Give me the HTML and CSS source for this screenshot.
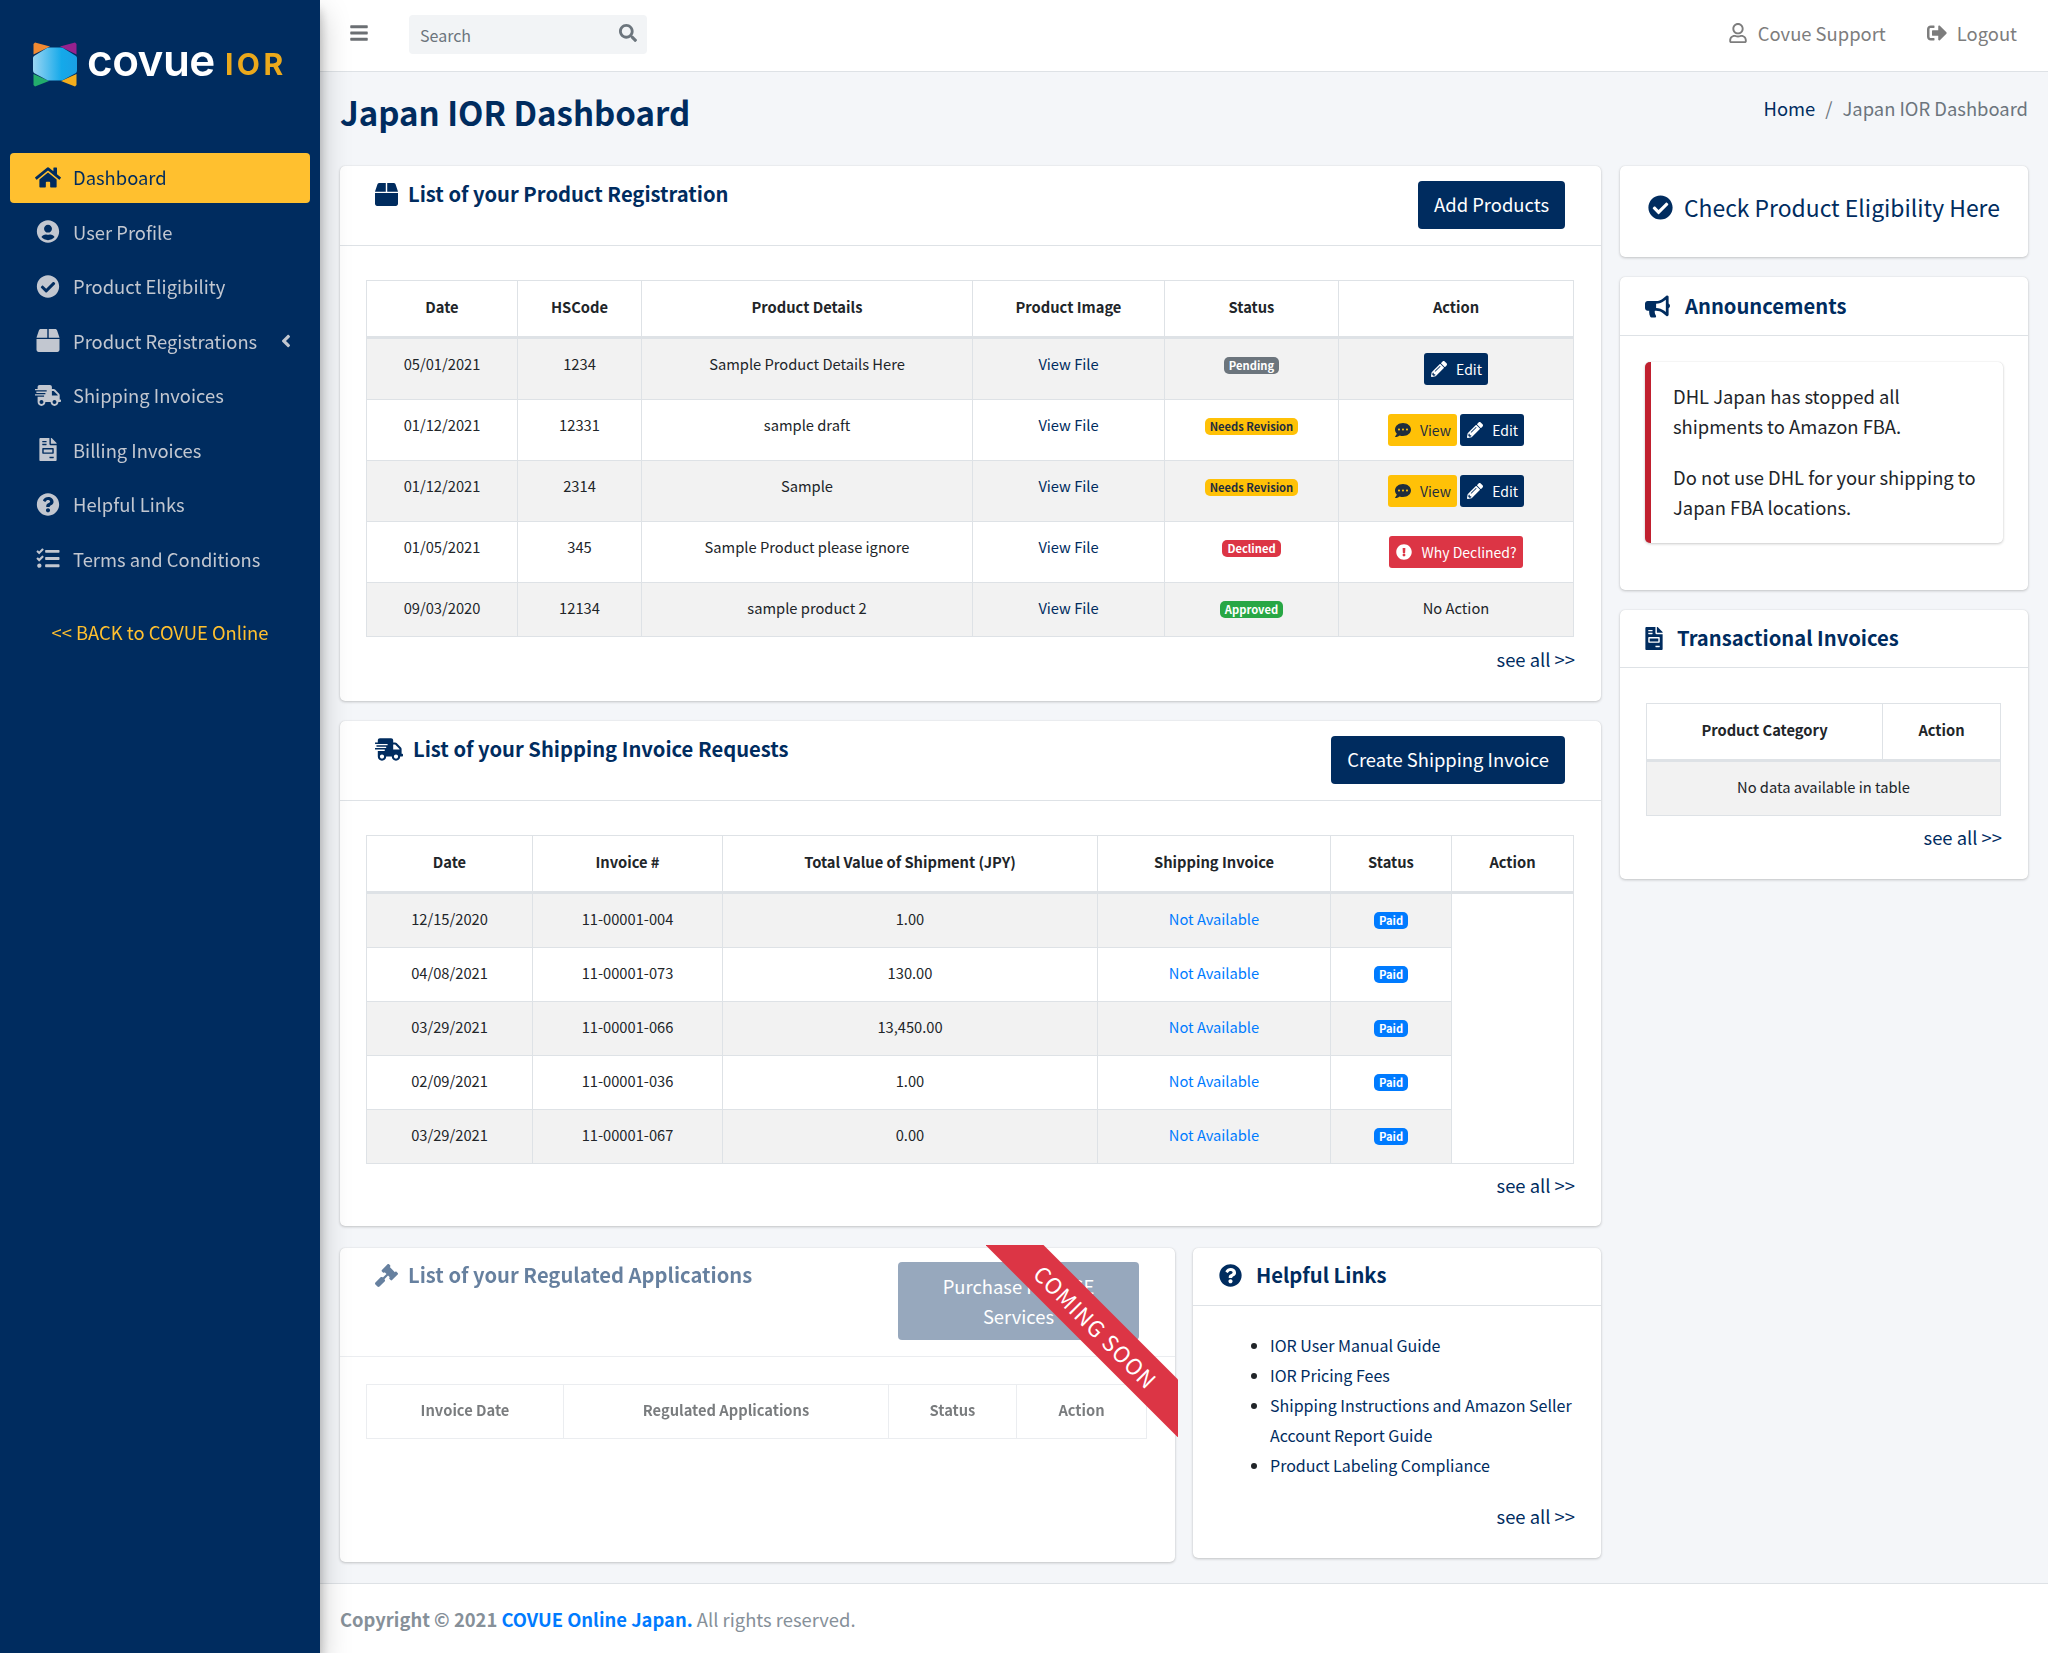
FILE: index.html
```html
<!DOCTYPE html>
<html lang="en">
<head>
    <meta charset="UTF-8">
    <meta name="viewport" content="width=device-width, initial-scale=1.0">
    <title>Japan IOR Dashboard</title>
    <link rel="stylesheet" href="styles.css">
</head>
<body>
    <!-- icon sprite -->
    <svg class="sprite" xmlns="http://www.w3.org/2000/svg">
        <symbol id="i-home" viewBox="0 0 576 512"><path d="M280.37 148.26L96 300.11V464a16 16 0 0 0 16 16l112.06-.29a16 16 0 0 0 15.92-16V368a16 16 0 0 1 16-16h64a16 16 0 0 1 16 16v95.64a16 16 0 0 0 16 16.05L464 480a16 16 0 0 0 16-16V300L295.67 148.26a12.19 12.19 0 0 0-15.3 0zM571.6 251.47L488 182.56V44.05a12 12 0 0 0-12-12h-56a12 12 0 0 0-12 12v72.61L318.47 43a48 48 0 0 0-61 0L4.34 251.47a12 12 0 0 0-1.6 16.9l25.5 31A12 12 0 0 0 45.15 301l235.22-193.74a12.19 12.19 0 0 1 15.3 0L530.9 301a12 12 0 0 0 16.9-1.6l25.5-31a12 12 0 0 0-1.7-16.93z"/></symbol>
        <symbol id="i-user-circle" viewBox="0 0 496 512"><path d="M248 8C111 8 0 119 0 256s111 248 248 248 248-111 248-248S385 8 248 8zm0 96c48.6 0 88 39.4 88 88s-39.4 88-88 88-88-39.4-88-88 39.4-88 88-88zm0 344c-58.7 0-111.3-26.6-146.5-68.2 18.8-35.4 55.6-59.8 98.5-59.8 2.4 0 4.8.4 7.1 1.1 13 4.2 26.6 6.9 40.9 6.9 14.3 0 28-2.7 40.9-6.9 2.3-.7 4.7-1.1 7.1-1.1 42.9 0 79.7 24.4 98.5 59.8C359.3 421.4 306.7 448 248 448z"/></symbol>
        <symbol id="i-check" viewBox="0 0 512 512"><path d="M504 256c0 136.967-111.033 248-248 248S8 392.967 8 256 119.033 8 256 8s248 111.033 248 248zM227.314 387.314l184-184c6.248-6.248 6.248-16.379 0-22.627l-22.627-22.627c-6.248-6.249-16.379-6.249-22.628 0L216 308.118l-70.059-70.059c-6.248-6.248-16.379-6.248-22.628 0l-22.627 22.627c-6.248 6.248-6.248 16.379 0 22.627l104 104c6.249 6.249 16.379 6.249 22.628.001z"/></symbol>
        <symbol id="i-box" viewBox="0 0 512 512"><path d="M509.5 184.6L458.9 32.8C452.4 13.2 434.1 0 413.4 0H272v192h238.7c-.4-2.5-.4-5-1.2-7.4zM240 0H98.6c-20.7 0-39 13.2-45.5 32.8L2.5 184.6c-.8 2.4-.8 4.9-1.2 7.4H240V0zM0 224v240c0 26.5 21.5 48 48 48h416c26.5 0 48-21.5 48-48V224H0z"/></symbol>
        <symbol id="i-truck" viewBox="0 0 640 512"><path d="M624 352h-16V243.9c0-12.7-5.1-24.9-14.1-33.9L494 110.1c-9-9-21.2-14.1-33.9-14.1H416V48c0-26.5-21.5-48-48-48H112C85.5 0 64 21.5 64 48v48H8c-4.4 0-8 3.6-8 8v16c0 4.4 3.6 8 8 8h272c4.4 0 8 3.6 8 8v16c0 4.4-3.6 8-8 8H40c-4.4 0-8 3.6-8 8v16c0 4.4 3.6 8 8 8h208c4.4 0 8 3.6 8 8v16c0 4.4-3.6 8-8 8H8c-4.4 0-8 3.6-8 8v16c0 4.4 3.6 8 8 8h208c4.4 0 8 3.6 8 8v16c0 4.4-3.6 8-8 8H64v128c0 53 43 96 96 96s96-43 96-96h128c0 53 43 96 96 96s96-43 96-96h48c8.8 0 16-7.2 16-16v-32c0-8.8-7.2-16-16-16zM160 464c-26.5 0-48-21.5-48-48s21.5-48 48-48 48 21.5 48 48-21.5 48-48 48zm320 0c-26.5 0-48-21.5-48-48s21.5-48 48-48 48 21.5 48 48-21.5 48-48 48zm80-208H416V144h44.1l99.9 99.9V256z"/></symbol>
        <symbol id="i-invoice" viewBox="0 0 384 512"><path d="M288 256H96v64h192v-64zm89-151L279.1 7c-4.5-4.5-10.6-7-17-7H256v128h128v-6.1c0-6.3-2.5-12.4-7-16.9zm-153 31V0H24C10.7 0 0 10.7 0 24v464c0 13.3 10.7 24 24 24h336c13.3 0 24-10.7 24-24V160H248c-13.2 0-24-10.8-24-24zM64 72c0-4.42 3.58-8 8-8h80c4.42 0 8 3.58 8 8v16c0 4.42-3.58 8-8 8H72c-4.42 0-8-3.58-8-8V72zm0 64c0-4.42 3.58-8 8-8h80c4.42 0 8 3.58 8 8v16c0 4.42-3.58 8-8 8H72c-4.42 0-8-3.58-8-8v-16zm256 304c0 4.42-3.58 8-8 8h-80c-4.42 0-8-3.58-8-8v-16c0-4.42 3.58-8 8-8h80c4.42 0 8 3.58 8 8v16zm0-200v96c0 8.84-7.16 16-16 16H80c-8.84 0-16-7.16-16-16v-96c0-8.84 7.16-16 16-16h224c8.84 0 16 7.16 16 16z"/></symbol>
        <symbol id="i-question" viewBox="0 0 512 512"><path d="M504 256c0 136.997-111.043 248-248 248S8 392.997 8 256C8 119.083 119.043 8 256 8s248 111.083 248 248zM262.655 90c-54.497 0-89.255 22.957-116.549 63.758-3.536 5.286-2.353 12.415 2.715 16.258l34.699 26.31c5.205 3.947 12.621 3.008 16.665-2.122 17.864-22.658 30.113-35.797 57.303-35.797 20.429 0 45.698 13.148 45.698 32.958 0 14.976-12.363 22.667-32.534 33.976C247.128 238.528 216 254.941 216 296v4c0 6.627 5.373 12 12 12h56c6.627 0 12-5.373 12-12v-1.333c0-28.462 83.186-29.647 83.186-106.667 0-58.002-60.165-102-116.531-102zM256 338c-25.365 0-46 20.635-46 46 0 25.364 20.635 46 46 46s46-20.636 46-46c0-25.365-20.635-46-46-46z"/></symbol>
        <symbol id="i-tasks" viewBox="0 0 512 512"><path d="M139.61 35.5a12 12 0 0 0-17 0L58.93 98.81l-22.7-22.12a12 12 0 0 0-17 0L3.53 92.41a12 12 0 0 0 0 17l47.59 47.4a12.78 12.78 0 0 0 17.61 0l15.59-15.62L156.52 69a12.09 12.09 0 0 0 .09-17zm0 159.19a12 12 0 0 0-17 0l-63.68 63.72-22.7-22.1a12 12 0 0 0-17 0L3.53 252a12 12 0 0 0 0 17L51 316.5a12.77 12.77 0 0 0 17.6 0l15.7-15.69 72.2-72.22a12 12 0 0 0 .09-16.9zM64 368c-26.49 0-48.59 21.5-48.59 48S37.53 464 64 464a48 48 0 0 0 0-96zm432 16H208a16 16 0 0 0-16 16v32a16 16 0 0 0 16 16h288a16 16 0 0 0 16-16v-32a16 16 0 0 0-16-16zm0-320H208a16 16 0 0 0-16 16v32a16 16 0 0 0 16 16h288a16 16 0 0 0 16-16V80a16 16 0 0 0-16-16zm0 160H208a16 16 0 0 0-16 16v32a16 16 0 0 0 16 16h288a16 16 0 0 0 16-16v-32a16 16 0 0 0-16-16z"/></symbol>
        <symbol id="i-pencil" viewBox="0 0 512 512"><path d="M497.9 142.1l-46.1 46.1c-4.7 4.7-12.3 4.7-17 0l-111-111c-4.7-4.7-4.7-12.3 0-17l46.1-46.1c18.7-18.7 49.1-18.7 67.9 0l60.1 60.1c18.8 18.7 18.8 49.1 0 67.9zM284.2 99.8L21.6 362.4.4 483.9c-2.9 16.4 11.4 30.6 27.8 27.8l121.5-21.3 262.6-262.6c4.7-4.7 4.7-12.3 0-17l-111-111c-4.8-4.7-12.4-4.7-17.1 0zM124.1 339.9c-5.5-5.5-5.5-14.3 0-19.8l154-154c5.5-5.5 14.3-5.5 19.8 0s5.5 14.3 0 19.8l-154 154c-5.5 5.5-14.3 5.5-19.8 0zM88 424h48v36.3l-64.5 11.3-31.1-31.1L51.7 376H88v48z"/></symbol>
        <symbol id="i-comment" viewBox="0 0 512 512"><path d="M256 32C114.6 32 0 125.1 0 240c0 49.6 21.4 95 57 130.7C44.5 421.1 2.7 466 2.2 466.5c-2.2 2.3-2.8 5.7-1.5 8.7S4.8 480 8 480c66.3 0 116-31.8 140.6-51.4 32.7 12.3 69 19.4 107.4 19.4 141.4 0 256-93.1 256-208S397.4 32 256 32zM128 272c-17.7 0-32-14.3-32-32s14.3-32 32-32 32 14.3 32 32-14.3 32-32 32zm128 0c-17.7 0-32-14.3-32-32s14.3-32 32-32 32 14.3 32 32-14.3 32-32 32zm128 0c-17.7 0-32-14.3-32-32s14.3-32 32-32 32 14.3 32 32-14.3 32-32 32z"/></symbol>
        <symbol id="i-exclaim" viewBox="0 0 512 512"><path d="M504 256c0 136.997-111.043 248-248 248S8 392.997 8 256C8 119.083 119.043 8 256 8s248 111.083 248 248zm-248 50c-25.405 0-46 20.595-46 46s20.595 46 46 46 46-20.595 46-46-20.595-46-46-46zm-43.673-165.346l7.418 136c.347 6.364 5.609 11.346 11.982 11.346h48.546c6.373 0 11.635-4.982 11.982-11.346l7.418-136c.375-6.874-5.098-12.654-11.982-12.654h-63.383c-6.884 0-12.356 5.78-11.981 12.654z"/></symbol>
        <symbol id="i-bullhorn" viewBox="0 0 576 512"><path d="M576 240c0-23.63-12.95-44.04-32-55.12V32.01C544 23.26 537.02 0 512 0c-7.12 0-14.19 2.38-19.98 7.02l-85.03 68.03C364.28 109.19 310.66 128 256 128H64c-35.35 0-64 28.65-64 64v96c0 35.35 28.65 64 64 64h33.7c-1.39 10.48-2.18 21.14-2.18 32 0 39.77 9.26 77.35 25.56 110.94 5.19 10.69 16.52 17.06 28.4 17.06h74.28c26.05 0 41.69-29.84 25.9-50.56-16.4-21.52-26.15-48.36-26.15-77.44 0-11.11 1.62-21.79 4.41-32H256c54.66 0 108.28 18.81 150.98 52.95l85.03 68.03a32.023 32.023 0 0 0 19.98 7.02c24.92 0 32-22.78 32-32V295.13C563.05 284.04 576 263.63 576 240zm-96 141.42l-33.05-26.44C392.95 311.78 325.12 288 256 288v-96c69.12 0 136.95-23.78 190.95-66.98L480 98.58v282.84z"/></symbol>
        <symbol id="i-gavel" viewBox="0 0 512 512"><path d="M504.971 199.362l-22.627-22.627c-9.373-9.373-24.569-9.373-33.941 0l-5.657 5.657L329.608 69.255l5.657-5.657c9.373-9.373 9.373-24.569 0-33.941L312.638 7.029c-9.373-9.373-24.569-9.373-33.941 0L154.246 131.48c-9.373 9.373-9.373 24.569 0 33.941l22.627 22.627c9.373 9.373 24.569 9.373 33.941 0l5.657-5.657 39.598 39.598-81.04 81.04-5.657-5.657c-12.497-12.497-32.758-12.497-45.255 0L9.373 412.118c-12.497 12.497-12.497 32.758 0 45.255l45.255 45.255c12.497 12.497 32.758 12.497 45.255 0l114.745-114.745c12.497-12.497 12.497-32.758 0-45.255l-5.657-5.657 81.04-81.04 39.598 39.598-5.657 5.657c-9.373 9.373-9.373 24.569 0 33.941l22.627 22.627c9.373 9.373 24.569 9.373 33.941 0l124.451-124.451c9.372-9.372 9.372-24.568 0-33.941z"/></symbol>
        <symbol id="i-search" viewBox="0 0 512 512"><path d="M505 442.7L405.3 343c-4.5-4.5-10.6-7-17-7H372c27.6-35.3 44-79.7 44-128C416 93.1 322.9 0 208 0S0 93.1 0 208s93.1 208 208 208c48.3 0 92.7-16.4 128-44v16.3c0 6.4 2.5 12.5 7 17l99.7 99.7c9.4 9.4 24.6 9.4 33.9 0l28.3-28.3c9.4-9.4 9.4-24.6.1-34zM208 336c-70.7 0-128-57.2-128-128 0-70.7 57.2-128 128-128 70.7 0 128 57.2 128 128 0 70.7-57.2 128-128 128z"/></symbol>
        <symbol id="i-bars" viewBox="0 0 448 512"><path d="M16 132h416c8.837 0 16-7.163 16-16V76c0-8.837-7.163-16-16-16H16C7.163 60 0 67.163 0 76v40c0 8.837 7.163 16 16 16zm0 160h416c8.837 0 16-7.163 16-16v-40c0-8.837-7.163-16-16-16H16c-8.837 0-16 7.163-16 16v40c0 8.837 7.163 16 16 16zm0 160h416c8.837 0 16-7.163 16-16v-40c0-8.837-7.163-16-16-16H16c-8.837 0-16 7.163-16 16v40c0 8.837 7.163 16 16 16z"/></symbol>
        <symbol id="i-logout" viewBox="0 0 512 512"><path d="M497 273L329 441c-15 15-41 4.5-41-17v-96H152c-13.3 0-24-10.7-24-24v-96c0-13.3 10.7-24 24-24h136V88c0-21.4 25.9-32 41-17l168 168c9.3 9.4 9.3 24.6 0 34zM192 436v-40c0-6.6-5.4-12-12-12H96c-17.7 0-32-14.3-32-32V160c0-17.7 14.3-32 32-32h84c6.6 0 12-5.4 12-12V76c0-6.6-5.4-12-12-12H96c-53 0-96 43-96 96v192c0 53 43 96 96 96h84c6.6 0 12-5.4 12-12z"/></symbol>
        <symbol id="i-user" viewBox="0 0 448 512"><path d="M313.6 304c-28.7 0-42.5 16-89.6 16-47.1 0-60.8-16-89.6-16C60.2 304 0 364.2 0 438.4V464c0 26.5 21.5 48 48 48h352c26.5 0 48-21.5 48-48v-25.6c0-74.2-60.2-134.4-134.4-134.4zM400 464H48v-25.6c0-47.6 38.8-86.4 86.4-86.4 14.6 0 38.3 16 89.6 16 51.7 0 74.9-16 89.6-16 47.6 0 86.4 38.8 86.4 86.4V464zM224 288c79.5 0 144-64.5 144-144S303.5 0 224 0 80 64.5 80 144s64.5 144 144 144zm0-240c52.9 0 96 43.1 96 96s-43.1 96-96 96-96-43.1-96-96 43.1-96 96-96z"/></symbol>
        <symbol id="i-angle" viewBox="0 0 256 512"><path d="M31.7 239l136-136c9.4-9.4 24.6-9.4 33.9 0l22.6 22.6c9.4 9.4 9.4 24.6 0 33.9L127.9 256l96.4 96.4c9.4 9.4 9.4 24.6 0 33.9L201.7 409c-9.4 9.4-24.6 9.4-33.9 0l-136-136c-9.5-9.4-9.5-24.6-.1-34z"/></symbol>
    </svg>

    <div class="wrapper">
        <aside class="sidebar">
            <a class="brand" href="#">
                <svg class="brand-mark" viewBox="0 0 44 45">
                    <defs>
                        <linearGradient id="markBlue" x1="0" x2="1" y1="0" y2="0">
                            <stop offset="0" stop-color="#9ad5f2"/>
                            <stop offset="0.65" stop-color="#14a9ea"/>
                            <stop offset="1" stop-color="#1a9fe4"/>
                        </linearGradient>
                    </defs>
                    <path fill="#f08a32" d="M2 0.5 L17 4.5 L0.5 12.5 L0.5 2 Z"/>
                    <path fill="#96218e" d="M42 0.5 L27 4.5 L43.5 12.5 L43.5 2 Z"/>
                    <path fill="#23ad6c" d="M0.5 32 L16 39 L2 44.5 L0.5 43 Z"/>
                    <path fill="#f3ae1d" d="M43.5 32 L28 39 L42 44.5 L43.5 43 Z"/>
                    <path fill="url(#markBlue)" d="M1 14 L14 6 Q15 5.5 16 5.5 L28 5.5 Q29 5.5 30 6 L43 14 Q44 15 44 16 L44 28 Q44 30 43 31 L30 38 Q29 38.5 28 38.5 L16 38.5 Q15 38.5 14 38 L1 31 Q0 30 0 28 L0 16 Q0 15 1 14 Z"/>
                </svg>
                <span class="brand-name">covue</span>
                <span class="brand-tag">IOR</span>
            </a>
            <ul class="nav">
                <li class="nav-item active"><svg class="nav-icon"><use href="#i-home"/></svg>Dashboard</li>
                <li class="nav-item"><svg class="nav-icon"><use href="#i-user-circle"/></svg>User Profile</li>
                <li class="nav-item"><svg class="nav-icon"><use href="#i-check"/></svg>Product Eligibility</li>
                <li class="nav-item"><svg class="nav-icon"><use href="#i-box"/></svg>Product Registrations<svg class="nav-angle"><use href="#i-angle"/></svg></li>
                <li class="nav-item"><svg class="nav-icon"><use href="#i-truck"/></svg>Shipping Invoices</li>
                <li class="nav-item"><svg class="nav-icon"><use href="#i-invoice"/></svg>Billing Invoices</li>
                <li class="nav-item"><svg class="nav-icon"><use href="#i-question"/></svg>Helpful Links</li>
                <li class="nav-item"><svg class="nav-icon"><use href="#i-tasks"/></svg>Terms and Conditions</li>
            </ul>
            <a class="back-link" href="#">&lt;&lt; BACK to COVUE Online</a>
        </aside>

        <div class="main">
            <header class="topbar">
                <svg class="topbar-bars"><use href="#i-bars"/></svg>
                <div class="search">
                    <span>Search</span>
                    <svg class="search-icon"><use href="#i-search"/></svg>
                </div>
                <div class="topbar-right">
                    <a class="topbar-link" href="#"><svg class="topbar-icon"><use href="#i-user"/></svg>Covue Support</a>
                    <a class="topbar-link" href="#"><svg class="topbar-icon"><use href="#i-logout"/></svg>Logout</a>
                </div>
            </header>

            <div class="page-head">
                <h1>Japan IOR Dashboard</h1>
                <div class="breadcrumb"><a href="#">Home</a><span class="sep">/</span><span>Japan IOR Dashboard</span></div>
            </div>

            <div class="content">
                <div class="col-left">
                    <section class="card">
                        <div class="card-head tall">
                            <h2 class="card-title"><svg class="title-icon"><use href="#i-box"/></svg>List of your Product Registration</h2>
                            <a class="btn-primary" href="#">Add Products</a>
                        </div>
                        <div class="card-body">
                            <table class="table">
                                <colgroup>
                                    <col class="w151"><col class="w124"><col class="w331"><col class="w192"><col class="w174"><col>
                                </colgroup>
                                <thead>
                                    <tr><th>Date</th><th>HSCode</th><th>Product Details</th><th>Product Image</th><th>Status</th><th>Action</th></tr>
                                </thead>
                                <tbody>
                                    <tr>
                                        <td>05/01/2021</td><td>1234</td><td>Sample Product Details Here</td><td><a href="#">View File</a></td>
                                        <td><span class="badge grey">Pending</span></td>
                                        <td><a class="btn-sm navy" href="#"><svg class="btn-icon"><use href="#i-pencil"/></svg>Edit</a></td>
                                    </tr>
                                    <tr>
                                        <td>01/12/2021</td><td>12331</td><td>sample draft</td><td><a href="#">View File</a></td>
                                        <td><span class="badge yellow">Needs Revision</span></td>
                                        <td><a class="btn-sm amber" href="#"><svg class="btn-icon"><use href="#i-comment"/></svg>View</a> <a class="btn-sm navy" href="#"><svg class="btn-icon"><use href="#i-pencil"/></svg>Edit</a></td>
                                    </tr>
                                    <tr>
                                        <td>01/12/2021</td><td>2314</td><td>Sample</td><td><a href="#">View File</a></td>
                                        <td><span class="badge yellow">Needs Revision</span></td>
                                        <td><a class="btn-sm amber" href="#"><svg class="btn-icon"><use href="#i-comment"/></svg>View</a> <a class="btn-sm navy" href="#"><svg class="btn-icon"><use href="#i-pencil"/></svg>Edit</a></td>
                                    </tr>
                                    <tr>
                                        <td>01/05/2021</td><td>345</td><td>Sample Product please ignore</td><td><a href="#">View File</a></td>
                                        <td><span class="badge red">Declined</span></td>
                                        <td><a class="btn-sm crimson" href="#"><svg class="btn-icon"><use href="#i-exclaim"/></svg>Why Declined?</a></td>
                                    </tr>
                                    <tr>
                                        <td>09/03/2020</td><td>12134</td><td>sample product 2</td><td><a href="#">View File</a></td>
                                        <td><span class="badge green">Approved</span></td>
                                        <td>No Action</td>
                                    </tr>
                                </tbody>
                            </table>
                            <div class="see-all"><a href="#">see all &gt;&gt;</a></div>
                        </div>
                    </section>

                    <section class="card compact">
                        <div class="card-head tall">
                            <h2 class="card-title"><svg class="title-icon wide"><use href="#i-truck"/></svg>List of your Shipping Invoice Requests</h2>
                            <a class="btn-primary" href="#">Create Shipping Invoice</a>
                        </div>
                        <div class="card-body">
                            <table class="table">
                                <colgroup>
                                    <col class="w166"><col class="w190"><col class="w375"><col class="w233"><col class="w121"><col>
                                </colgroup>
                                <thead>
                                    <tr><th>Date</th><th>Invoice #</th><th>Total Value of Shipment (JPY)</th><th>Shipping Invoice</th><th>Status</th><th>Action</th></tr>
                                </thead>
                                <tbody>
                                    <tr><td>12/15/2020</td><td>11-00001-004</td><td>1.00</td><td><a class="blue" href="#">Not Available</a></td><td><span class="badge paid">Paid</span></td></tr>
                                    <tr><td>04/08/2021</td><td>11-00001-073</td><td>130.00</td><td><a class="blue" href="#">Not Available</a></td><td><span class="badge paid">Paid</span></td></tr>
                                    <tr><td>03/29/2021</td><td>11-00001-066</td><td>13,450.00</td><td><a class="blue" href="#">Not Available</a></td><td><span class="badge paid">Paid</span></td></tr>
                                    <tr><td>02/09/2021</td><td>11-00001-036</td><td>1.00</td><td><a class="blue" href="#">Not Available</a></td><td><span class="badge paid">Paid</span></td></tr>
                                    <tr><td>03/29/2021</td><td>11-00001-067</td><td>0.00</td><td><a class="blue" href="#">Not Available</a></td><td><span class="badge paid">Paid</span></td></tr>
                                </tbody>
                            </table>
                            <div class="see-all"><a href="#">see all &gt;&gt;</a></div>
                        </div>
                    </section>

                    <div class="bottom-row">
                        <section class="card regulated">
                            <div class="faded">
                                <div class="card-head regulated-head">
                                    <h2 class="card-title"><svg class="title-icon"><use href="#i-gavel"/></svg>List of your Regulated Applications</h2>
                                    <a class="btn-primary two-line" href="#">Purchase IOR PSE<br>Services</a>
                                </div>
                                <div class="card-body regulated-body">
                                    <table class="table plain">
                                        <colgroup>
                                            <col class="w197"><col class="w325"><col class="w128"><col>
                                        </colgroup>
                                        <thead>
                                            <tr><th>Invoice Date</th><th>Regulated Applications</th><th>Status</th><th>Action</th></tr>
                                        </thead>
                                    </table>
                                </div>
                            </div>
                            <div class="ribbon"><span>COMING SOON</span></div>
                        </section>

                        <section class="card links">
                            <div class="card-head short">
                                <h2 class="card-title"><svg class="title-icon gap-md"><use href="#i-question"/></svg>Helpful Links</h2>
                            </div>
                            <div class="card-body links-body">
                                <ul class="link-list">
                                    <li><a href="#">IOR User Manual Guide</a></li>
                                    <li><a href="#">IOR Pricing Fees</a></li>
                                    <li><a href="#">Shipping Instructions and Amazon Seller Account Report Guide</a></li>
                                    <li><a href="#">Product Labeling Compliance</a></li>
                                </ul>
                                <div class="see-all"><a href="#">see all &gt;&gt;</a></div>
                            </div>
                        </section>
                    </div>
                </div>

                <div class="col-right">
                    <section class="card eligibility">
                        <a href="#"><svg class="eligibility-icon"><use href="#i-check"/></svg>Check Product Eligibility Here</a>
                    </section>

                    <section class="card">
                        <div class="card-head short announce-head">
                            <h2 class="card-title"><svg class="title-icon gap-lg"><use href="#i-bullhorn"/></svg>Announcements</h2>
                        </div>
                        <div class="card-body announce-body">
                            <div class="callout">
                                <p>DHL Japan has stopped all shipments to Amazon FBA.</p>
                                <p>Do not use DHL for your shipping to Japan FBA locations.</p>
                            </div>
                        </div>
                    </section>

                    <section class="card">
                        <div class="card-head short trans-head">
                            <h2 class="card-title"><svg class="title-icon doc"><use href="#i-invoice"/></svg>Transactional Invoices</h2>
                        </div>
                        <div class="card-body trans-body">
                            <table class="table">
                                <colgroup><col class="w236"><col></colgroup>
                                <thead><tr><th>Product Category</th><th>Action</th></tr></thead>
                                <tbody><tr><td colspan="2">No data available in table</td></tr></tbody>
                            </table>
                            <div class="see-all"><a href="#">see all &gt;&gt;</a></div>
                        </div>
                    </section>
                </div>
            </div>

            <footer class="footer">
                <strong>Copyright &copy; 2021 <a href="#">COVUE Online Japan.</a></strong> All rights reserved.
            </footer>
        </div>
    </div>
</body>
</html>
```

FILE: styles.css
```css
* {
    margin: 0;
    padding: 0;
    box-sizing: border-box;
}

body {
    font-family: "Noto Sans CJK JP", "Noto Sans", sans-serif;
    font-size: 16px;
    line-height: 24px;
    color: #212529;
    background: #f4f6f9;
}

a {
    color: #002c5f;
    text-decoration: none;
}

svg {
    fill: currentColor;
}

.sprite {
    display: none;
}

.wrapper {
    display: flex;
    min-height: 1653px;
}

/* sidebar */
.sidebar {
    flex: 0 0 320px;
    background: #002c5f;
    box-shadow: 0 14px 28px rgba(0,0,0,0.25), 0 10px 10px rgba(0,0,0,0.22);
    position: relative;
    z-index: 2;
    padding: 0 10px;
}

.brand {
    display: flex;
    align-items: center;
    height: 153px;
    padding: 0 0 24px 23px;
}

.brand-mark {
    width: 44px;
    height: 45px;
    flex: none;
}

.brand-name {
    margin-left: 10px;
    font-family: Inter, sans-serif;
    font-size: 44px;
    line-height: 45px;
    font-weight: 600;
    letter-spacing: -0.5px;
    color: #fff;
    padding-bottom: 8px;
}

.brand-tag {
    margin-left: 10px;
    font-family: Inter, sans-serif;
    font-size: 30px;
    line-height: 45px;
    font-weight: 700;
    letter-spacing: 3.5px;
    color: #eba91c;
}

.nav {
    list-style: none;
}

.nav-item {
    display: flex;
    align-items: center;
    height: 50px;
    margin-bottom: 4.5px;
    padding: 0 0 2px 25px;
    border-radius: 4px;
    font-size: 18.4px;
    color: #c2c7d0;
}

.nav-item.active {
    background: #ffc02f;
    color: #002c5f;
}

.nav-icon {
    width: 26px;
    height: 23px;
    margin-right: 12px;
    flex: none;
}

.nav-angle {
    width: 12px;
    height: 20px;
    margin-left: 23px;
}

.back-link {
    display: block;
    margin-top: 32px;
    text-align: center;
    font-size: 18.4px;
    line-height: 30px;
    color: #ffc02f;
}

/* main area */
.main {
    flex: 1;
    min-width: 0;
    display: flex;
    flex-direction: column;
}

.topbar {
    display: flex;
    align-items: center;
    height: 72px;
    background: #fff;
    border-bottom: 1px solid #dee2e6;
    padding: 0 31px 3px 30px;
}

.topbar-bars {
    width: 18px;
    height: 20px;
    color: #6b6f73;
    margin-bottom: 3px;
}

.search {
    display: flex;
    align-items: center;
    justify-content: space-between;
    width: 238px;
    height: 39px;
    margin-left: 41px;
    padding: 2px 10px 0 11px;
    background: #f2f4f6;
    border-radius: 4px;
    font-size: 16px;
    color: #6c757d;
}

.search-icon {
    width: 18px;
    height: 18px;
    margin-bottom: 4px;
}

.topbar-right {
    display: flex;
    gap: 41px;
    margin-left: auto;
    padding-bottom: 2px;
}

.topbar-link {
    display: flex;
    align-items: center;
    font-size: 18.4px;
    color: #7d7d7d;
}

.topbar-icon {
    width: 20px;
    height: 20px;
    margin-right: 10px;
}

.page-head {
    display: flex;
    justify-content: space-between;
    align-items: flex-start;
    height: 94px;
    padding: 18px 20px 0;
}

h1 {
    font-size: 33px;
    line-height: 44px;
    font-weight: 700;
    color: #002c5f;
}

.breadcrumb {
    font-size: 18.4px;
    line-height: 36px;
    color: #6c757d;
}

.breadcrumb .sep {
    margin: 0 10px;
}

.content {
    display: grid;
    grid-template-columns: 1261px 408px;
    gap: 19px;
    padding: 0 20px;
    flex: 1;
}

.col-left, .col-right {
    display: flex;
    flex-direction: column;
    gap: 20px;
    align-items: stretch;
}

/* cards */
.card {
    background: #fff;
    border-radius: 5px;
    box-shadow: 0 0 1px rgba(0,0,0,0.13), 0 1px 3px rgba(0,0,0,0.2);
    position: relative;
}

.card-head {
    display: flex;
    justify-content: space-between;
    align-items: flex-start;
    border-bottom: 1px solid #dee2e6;
}

.card-head.tall {
    height: 80px;
    padding: 15px 36px 0 35px;
}

.card-head.tall .card-title {
    margin-top: -2px;
}

.card-head.short {
    height: 58px;
    padding: 12px 24px 0 25px;
}

.card-head.announce-head {
    height: 59px;
    padding-top: 14px;
}

.card-head.trans-head {
    padding-top: 13px;
}

.card-title {
    display: flex;
    align-items: center;
    font-size: 20.2px;
    line-height: 30px;
    font-weight: 700;
    color: #002c5f;
}

.title-icon {
    width: 23px;
    height: 23px;
    margin-right: 10px;
}

.title-icon.wide {
    width: 28px;
    margin-right: 10px;
}

.title-icon.gap-lg {
    width: 25px;
    margin-right: 15px;
}

.title-icon.gap-md {
    width: 25px;
    margin-right: 13px;
}

.title-icon.doc {
    width: 18px;
    margin-right: 14px;
}

.btn-primary {
    display: block;
    padding: 8px 16px 10px;
    font-size: 18.4px;
    line-height: 30px;
    color: #fff;
    background: #002c5f;
    border-radius: 4px;
    text-align: center;
}

.card-body {
    padding: 34px 27px 0 26px;
}

.card-body .see-all {
    text-align: right;
    font-size: 18.4px;
    line-height: 30px;
    margin: 7px -1px 27px 0;
}

.compact .card-body .see-all {
    margin-top: 6px;
    margin-bottom: 26px;
}

/* tables */
.table {
    width: 100%;
    table-layout: fixed;
    border-collapse: collapse;
    border: 1px solid #dee2e6;
    text-align: center;
    font-size: 14.7px;
}

.table th {
    height: 57px;
    padding-bottom: 4px;
    border: 1px solid #dee2e6;
    border-bottom: 3px solid #dee2e6;
    font-weight: 700;
}

.table td {
    padding: 13px 12px 16px;
    border: 1px solid #dee2e6;
    vertical-align: top;
}

.table tbody tr:nth-child(odd) td {
    background: #f2f2f2;
}

.table td a {
    color: #002c5f;
}

.table td a.blue {
    color: #007bff;
}

.table.plain th {
    height: 54px;
    border-bottom-width: 1px;
}

.w124 { width: 124px; }
.w128 { width: 128px; }
.w121 { width: 121px; }
.w151 { width: 151px; }
.w166 { width: 166px; }
.w174 { width: 174px; }
.w190 { width: 190px; }
.w192 { width: 192px; }
.w197 { width: 197px; }
.w233 { width: 233px; }
.w236 { width: 236px; }
.w325 { width: 325px; }
.w331 { width: 331px; }
.w375 { width: 375px; }

.badge {
    display: inline-block;
    padding: 0 5px;
    font-size: 11.2px;
    line-height: 17px;
    font-weight: 700;
    border-radius: 5px;
    margin-top: 5px;
    vertical-align: top;
    color: #fff;
}

.badge.grey { background: #6c757d; }
.badge.yellow { background: #ffc107; color: #1f2d3d; }
.badge.red { background: #dc3545; }
.badge.green { background: #28a745; }
.badge.paid { background: #007bff; }

.table td .btn-sm {
    display: inline-flex;
    align-items: center;
    height: 32px;
    margin: 1px 0 -2px;
    padding: 0 6px 0 7px;
    font-size: 14px;
    border-radius: 3px;
    vertical-align: top;
}

.table td .btn-sm.navy { background: #002c5f; color: #fff; }
.table td .btn-sm.amber { background: #ffc107; color: #1f2d3d; }
.table td .btn-sm.crimson { background: #dc3545; color: #fff; }

.btn-icon {
    width: 16px;
    height: 16px;
    margin-right: 9px;
}

/* bottom row */
.bottom-row {
    display: grid;
    grid-template-columns: 835px 408px;
    gap: 18px;
    align-items: start;
    margin-top: 2px;
}

.regulated {
    height: 314px;
}

.faded {
    opacity: 0.6;
}

.regulated-head {
    height: 109px;
    padding: 14px 36px 0 35px;
}

.regulated-head .card-title {
    margin-top: -2px;
}

.btn-primary.two-line {
    width: 241px;
    height: 78px;
    padding: 9px 16px;
    opacity: 0.68;
}

.regulated-body {
    padding: 27px 28px 0 26px;
}

.ribbon {
    position: absolute;
    top: -3px;
    right: -3px;
    width: 192px;
    height: 192px;
    overflow: hidden;
}

.ribbon span {
    position: absolute;
    left: -40px;
    top: 61px;
    width: 300px;
    height: 41px;
    background: #dc3545;
    color: #fff;
    font-size: 22px;
    line-height: 41px;
    letter-spacing: 1px;
    text-align: center;
    transform: rotate(45deg);
}

.links {
    height: 310px;
}

.links-body {
    padding: 24px 27px 0 26px;
}

.link-list {
    padding-left: 51px;
    font-size: 16px;
    line-height: 30px;
}

.links-body .see-all {
    margin-top: 21px;
}

/* right column */
.eligibility {
    height: 91px;
    padding: 24px 0 0 28px;
}

.eligibility a {
    display: flex;
    align-items: center;
    font-size: 22.9px;
    line-height: 34px;
    white-space: nowrap;
}

.eligibility-icon {
    width: 25px;
    height: 25px;
    margin-right: 11px;
}

.announce-body {
    padding: 26px 25px 47px;
}

.callout {
    padding: 19px 20px 21px 22px;
    background: #fff;
    border-left: 6px solid #c0202f;
    border-radius: 5px;
    box-shadow: 0 0 1px rgba(0,0,0,0.13), 0 1px 3px rgba(0,0,0,0.2);
    font-size: 18.4px;
    line-height: 30px;
}

.callout p + p {
    margin-top: 21px;
}

.trans-body {
    padding: 35px 27px 0 26px;
}

.trans-body .see-all {
    margin-top: 6px;
    margin-bottom: 27px;
}

/* footer */
.footer {
    height: 70px;
    padding: 20px 20px 0;
    background: #fff;
    border-top: 1px solid #dee2e6;
    font-size: 18.4px;
    line-height: 30px;
    color: #869099;
}

.footer a {
    color: #007bff;
}
```
